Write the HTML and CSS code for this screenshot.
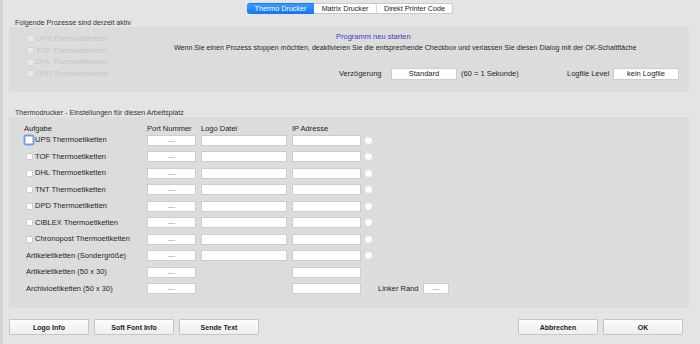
FILE: index.html
```html
<!DOCTYPE html>
<html lang="de">
<head>
    <meta charset="UTF-8">
    <meta name="viewport" content="width=device-width, initial-scale=1.0">
    <title>Drucker Einstellungen</title>
    <link rel="stylesheet" href="styles.css">
</head>
<body>
    <!-- Tab bar -->
    <div class="tabs">
        <span class="tab tab-thermo active">Thermo Drucker</span>
        <span class="tab tab-matrix">Matrix Drucker</span>
        <span class="tab tab-direct">Direkt Printer Code</span>
    </div>

    <!-- Active processes -->
    <div class="section-title">Folgende Prozesse sind derzeit aktiv</div>
    <div class="box box-active">
        <div class="active-list">
            <div class="active-row"><span class="check disabled"></span>UPS Thermoetiketten</div>
            <div class="active-row"><span class="check disabled"></span>TOF Thermoetiketten</div>
            <div class="active-row"><span class="check disabled"></span>DHL Thermoetiketten</div>
            <div class="active-row"><span class="check disabled"></span>DPD Thermoetiketten</div>
        </div>
        <div class="active-info">
            <div class="restart">Programm neu starten</div>
            <div class="hint">Wenn Sie einen Prozess stoppen möchten, deaktivieren Sie die entsprechende Checkbox und verlassen Sie diesen Dialog mit der OK-Schaltfläche</div>
            <div class="options">
                <span class="opt-label delay-label">Verzögerung</span>
                <span class="field field-wide">Standard</span>
                <span class="delay-note">(60 = 1 Sekunde)</span>
                <span class="opt-label log-label">Logfile Level</span>
                <span class="field field-wide">kein Logfile</span>
            </div>
        </div>
    </div>

    <!-- Printer settings -->
    <div class="section-title second">Thermodrucker - Einstellungen für diesen Arbeitsplatz</div>
    <div class="box box-printers">
        <div class="row head">
            <span class="task">Aufgabe</span>
            <span class="col-port">Port Nummer</span>
            <span class="col-logo">Logo Datei</span>
            <span class="col-ip">IP Adresse</span>
        </div>
        <div class="row">
            <span class="task"><span class="check focused"></span>UPS Thermoetiketten</span>
            <span class="field col-port">---</span>
            <span class="field col-logo"></span>
            <span class="field col-ip"></span>
            <span class="radio"></span>
        </div>
        <div class="row">
            <span class="task"><span class="check"></span>TOF Thermoetiketten</span>
            <span class="field col-port">---</span>
            <span class="field col-logo"></span>
            <span class="field col-ip"></span>
            <span class="radio"></span>
        </div>
        <div class="row">
            <span class="task"><span class="check"></span>DHL Thermoetiketten</span>
            <span class="field col-port">---</span>
            <span class="field col-logo"></span>
            <span class="field col-ip"></span>
            <span class="radio"></span>
        </div>
        <div class="row">
            <span class="task"><span class="check"></span>TNT Thermoetiketten</span>
            <span class="field col-port">---</span>
            <span class="field col-logo"></span>
            <span class="field col-ip"></span>
            <span class="radio"></span>
        </div>
        <div class="row">
            <span class="task"><span class="check"></span>DPD Thermoetiketten</span>
            <span class="field col-port">---</span>
            <span class="field col-logo"></span>
            <span class="field col-ip"></span>
            <span class="radio"></span>
        </div>
        <div class="row">
            <span class="task"><span class="check"></span>CIBLEX Thermoetiketten</span>
            <span class="field col-port">---</span>
            <span class="field col-logo"></span>
            <span class="field col-ip"></span>
            <span class="radio"></span>
        </div>
        <div class="row">
            <span class="task"><span class="check"></span>Chronopost Thermoetiketten</span>
            <span class="field col-port">---</span>
            <span class="field col-logo"></span>
            <span class="field col-ip"></span>
            <span class="radio"></span>
        </div>
        <div class="row">
            <span class="task plain">Artikeletiketten (Sondergröße)</span>
            <span class="field col-port">---</span>
            <span class="field col-logo"></span>
            <span class="field col-ip"></span>
            <span class="radio"></span>
        </div>
        <div class="row">
            <span class="task plain">Artikeletiketten (50 x 30)</span>
            <span class="field col-port">---</span>
            <span class="col-logo"></span>
            <span class="field col-ip"></span>
        </div>
        <div class="row">
            <span class="task plain">Archivioetiketten (50 x 30)</span>
            <span class="field col-port">---</span>
            <span class="col-logo"></span>
            <span class="field col-ip"></span>
            <span class="margin-label">Linker Rand</span>
            <span class="field field-small">---</span>
        </div>
    </div>

    <!-- Buttons -->
    <div class="buttons">
        <div class="button-group">
            <button type="button">Logo Info</button>
            <button type="button">Soft Font Info</button>
            <button type="button">Sende Text</button>
        </div>
        <div class="button-group">
            <button type="button">Abbrechen</button>
            <button type="button">OK</button>
        </div>
    </div>
</body>
</html>
```

FILE: styles.css
```css
/* Dialog base */
body {
    margin: 0;
    height: 344px;
    overflow: hidden;
    font-family: "Liberation Sans", Arial, sans-serif;
    font-size: 7.5px;
    line-height: 8px;
    color: #262626;
    background-color: #e4e4e4;
    border-left: 3px solid #d3d3d3;
}

/* Tabs */
.tabs {
    display: flex;
    justify-content: center;
    margin: 3px 0 0 -3px;
    height: 11px;
}

.tab {
    height: 11px;
    line-height: 10px;
    font-size: 7.2px;
    text-align: center;
    background: #fff;
    border-top: 1px solid #c9c9c9;
    border-bottom: 1px solid #c9c9c9;
    box-sizing: border-box;
    color: #222;
}

.tab-thermo {
    width: 67px;
    border-radius: 3px 0 0 3px;
}

.tab-matrix {
    width: 63px;
    border-right: 1px solid #d6d6d6;
}

.tab-direct {
    width: 76px;
    border-right: 1px solid #c9c9c9;
    border-radius: 0 3px 3px 0;
}

.tab.active {
    color: #fff;
    background: linear-gradient(#3e9bff, #1877f2);
    border-color: #1a78f0;
}

/* Sections */
.section-title {
    margin: 5px 0 0 12px;
    height: 8px;
    font-size: 7.1px;
    color: #333;
}

.section-title.second {
    margin-top: 17px;
}

.box {
    margin-left: 6px;
    width: 680px;
    background: #dcdcdc;
    border-radius: 2px;
}

.box-active {
    display: flex;
    height: 65px;
    box-sizing: border-box;
    padding: 6px 10px 0 18px;
}

.active-list {
    width: 147px;
    flex-shrink: 0;
}

.active-row {
    height: 11.7px;
    display: flex;
    align-items: center;
    white-space: nowrap;
    color: #c6c6c6;
}

.check {
    display: inline-block;
    flex-shrink: 0;
    width: 7px;
    height: 7px;
    margin-right: 2px;
    background: #fff;
    border: 1px solid #cbcbcb;
    box-sizing: border-box;
    border-radius: 1px;
}

.check.disabled {
    background: #e9e9e9;
    border-color: #d6d6d6;
}

.check.focused {
    width: 8px;
    height: 8px;
    margin-left: -1px;
    margin-right: 2px;
    box-shadow: 0 0 0 1.5px #6f9fea;
}

.active-info {
    flex: 1;
}

.restart {
    margin-left: 162px;
    color: #3b3fb4;
}

.hint {
    margin-top: 3px;
    font-size: 7.1px;
    white-space: nowrap;
}

.options {
    display: flex;
    align-items: center;
    margin: 16px 0 0 165px;
}

.opt-label {
    display: inline-block;
}

.delay-label {
    width: 52px;
}

.delay-note {
    margin-left: 4px;
}

.log-label {
    margin-left: auto;
    width: 46px;
}

/* Input look-alike fields */
.field {
    display: inline-block;
    height: 11px;
    line-height: 9px;
    box-sizing: border-box;
    background: #fff;
    border: 1px solid #cdcdcd;
    text-align: center;
    font-size: 7px;
    color: #888;
}

.field-wide {
    width: 66px;
    height: 12px;
    line-height: 10px;
    font-size: 7.5px;
    color: #222;
}

.field-small {
    width: 26px;
}

/* Printer table */
.box-printers {
    height: 191px;
    box-sizing: border-box;
    padding: 8px 0 0 15px;
}

.row {
    display: flex;
    align-items: center;
    height: 16.5px;
}

.row.head {
    height: 7px;
    line-height: 7px;
}

.task {
    width: 123px;
    flex-shrink: 0;
    display: flex;
    align-items: center;
    white-space: nowrap;
}

.row .task .check {
    margin-left: 2px;
}

.row .task .check.focused {
    margin-left: 1px;
}

.task.plain {
    padding-left: 2px;
    box-sizing: border-box;
}

.col-port {
    width: 49px;
    flex-shrink: 0;
}

.col-logo {
    width: 86px;
    flex-shrink: 0;
    margin-left: 5px;
}

.col-ip {
    width: 69px;
    flex-shrink: 0;
    margin-left: 5px;
}

.head .col-port,
.head .col-logo,
.head .col-ip {
    display: inline-block;
    white-space: nowrap;
}

.radio {
    width: 7px;
    height: 7px;
    margin-left: 4px;
    border-radius: 50%;
    background: #fbfbfb;
}

.margin-label {
    margin-left: 17px;
    width: 45px;
    white-space: nowrap;
}

/* Bottom buttons */
.buttons {
    display: flex;
    justify-content: space-between;
    margin: 11px 17px 0 6px;
}

.button-group {
    display: flex;
    gap: 5px;
}

button {
    width: 80px;
    height: 16px;
    padding: 0;
    font-family: "Liberation Sans", Arial, sans-serif;
    font-size: 7px;
    font-weight: bold;
    color: #222;
    background: linear-gradient(#fcfcfc, #eeeeee);
    border: 1px solid #c6c6c6;
    border-radius: 1px;
}
```
